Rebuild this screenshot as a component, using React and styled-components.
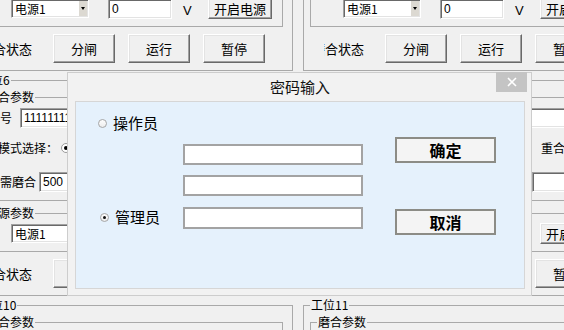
import styled, { createGlobalStyle } from "styled-components";

const GlobalStyle = createGlobalStyle`
  html, body { margin: 0; padding: 0; background: #f0f0f0; overflow: hidden; }
  * { box-sizing: border-box; }
`;

const cjk = `"Noto Sans CJK SC", "Liberation Sans", sans-serif`;

const Screen = styled.div`
  position: relative;
  width: 564px;
  height: 330px;
  overflow: hidden;
  background: #f0f0f0;
  font-family: ${cjk};
  color: #000;
`;

/* ---------- background form: station group boxes ---------- */

const StationGrid = styled.div`
  display: grid;
  grid-template-columns: repeat(2, 322px);
  column-gap: 10px;
  row-gap: 2px;
  margin: -152px 0 0 -29px;
`;

const GroupBox = styled.fieldset`
  margin: ${(p) => p.$margin || 0};
  padding: ${(p) => p.$padding};
  border: 1px solid #a9a9a9;
  min-width: 0;
`;

const Legend = styled.legend`
  padding: 0 1px;
  font-size: 12px;
  line-height: 14px;
  white-space: nowrap;
`;

const FieldRow = styled.div`
  display: flex;
  align-items: center;
  height: ${(p) => p.$h}px;
`;

const FieldLabel = styled.span`
  flex: none;
  width: ${(p) => p.$w}px;
  margin-left: ${(p) => p.$ml || 0}px;
  text-align: right;
  white-space: nowrap;
  font-size: 12px;
  line-height: 16px;
`;

const TextBox = styled.div`
  flex: none;
  width: ${(p) => p.$w}px;
  height: 20px;
  margin-left: ${(p) => p.$ml || 0}px;
  padding: 0 3px;
  background: #fff;
  border: 1px solid;
  border-color: #a0a0a0 #fff #fff #a0a0a0;
  box-shadow: inset 1px 1px 0 #696969, inset -1px -1px 0 #e3e3e3;
  font: 12px/18px "Liberation Sans", sans-serif;
  overflow: hidden;
  white-space: nowrap;
`;

const Combo = styled.div`
  flex: none;
  display: flex;
  width: 78px;
  height: 19px;
  margin-left: ${(p) => p.$ml}px;
  background: #fff;
  border: 1px solid;
  border-color: #a0a0a0 #fff #fff #a0a0a0;
  box-shadow: inset 1px 1px 0 #696969, inset -1px -1px 0 #e3e3e3;
`;

const ComboText = styled.span`
  flex: 1;
  padding-left: 3px;
  font-size: 12px;
  line-height: 17px;
`;

const ComboArrow = styled.span`
  display: flex;
  align-items: center;
  justify-content: center;
  width: 9px;
  margin: 1px 1px 1px 0;
  background: #dcd9d2;
  border-left: 1px solid #fff;

  &::after {
    content: "";
    border-left: 2px solid transparent;
    border-right: 2px solid transparent;
    border-top: 3px solid #000;
  }
`;

const Unit = styled.span`
  flex: none;
  width: 36px;
  padding: 5px 0 0 11px;
  font: 13px/16px "Liberation Sans", sans-serif;
`;

const ClassicButton = styled.button`
  flex: none;
  width: ${(p) => p.$w}px;
  height: ${(p) => p.$h}px;
  margin: 0 0 0 ${(p) => p.$ml || 0}px;
  padding: 0;
  font-family: ${cjk};
  font-size: 13px;
  line-height: 16px;
  color: #000;
  background: #f0f0f0;
  border: 1px solid;
  border-color: #fff #696969 #696969 #fff;
  box-shadow: inset -1px -1px 0 #a0a0a0, inset 1px 1px 0 #e3e3e3;
`;

const Option = styled.span`
  flex: none;
  display: flex;
  align-items: center;
  margin-left: ${(p) => p.$ml}px;
  font-size: 12px;
  line-height: 16px;
  white-space: nowrap;
`;

const OptionDot = styled.span`
  position: relative;
  width: 10px;
  height: 10px;
  margin-right: 9px;
  border-radius: 50%;
  border: 1px solid #9a9a9a;
  background: #fff;

  &::after {
    content: "";
    display: ${(p) => (p.$checked ? "block" : "none")};
    position: absolute;
    left: 2px;
    top: 2px;
    width: 4px;
    height: 4px;
    border-radius: 50%;
    background: #000;
  }
`;

const StatusRow = styled.div`
  display: flex;
  align-items: center;
  padding: 7px 0;
`;

const StatusLabel = styled.span`
  flex: none;
  display: flex;
  justify-content: flex-end;
  width: 40px;
  margin-left: 14px;
  overflow: hidden;
  white-space: nowrap;
  font-size: 13px;
  line-height: 16px;
`;

const ButtonStrip = styled.div`
  display: flex;
  gap: 13px;
  margin-left: 21px;
`;

function Station({ no }) {
  return (
    <GroupBox $padding="3px 9px 0 6px">
      <Legend>工位{no}</Legend>
      <GroupBox $padding="0 6px">
        <Legend>磨合参数</Legend>
        <FieldRow $h={28}>
          <FieldLabel $w={27}>编号</FieldLabel>
          <TextBox $w={252} $ml={8}>11111111</TextBox>
        </FieldRow>
        <FieldRow $h={32}>
          <FieldLabel $w={73}>模式选择：</FieldLabel>
          <Option $ml={3}>
            <OptionDot $checked />
            首次磨合
          </Option>
          <Option $ml={62}>
            <OptionDot />
            重合磨合
          </Option>
        </FieldRow>
        <FieldRow $h={36}>
          <FieldLabel $w={51}>所需磨合</FieldLabel>
          <TextBox $w={80} $ml={3}>500</TextBox>
          <FieldLabel $w={76}>间隔时间</FieldLabel>
          <TextBox $w={72} $ml={5} />
        </FieldRow>
      </GroupBox>
      <GroupBox $margin="5px 0 0" $padding="0 6px 4px">
        <Legend>电源参数</Legend>
        <FieldRow $h={27}>
          <Combo $ml={26}>
            <ComboText>电源1</ComboText>
            <ComboArrow />
          </Combo>
          <TextBox $w={64} $ml={19}>0</TextBox>
          <Unit>V</Unit>
          <ClassicButton $w={64} $h={21}>开启电源</ClassicButton>
        </FieldRow>
      </GroupBox>
      <StatusRow>
        <StatusLabel>磨合状态</StatusLabel>
        <ButtonStrip>
          <ClassicButton $w={62} $h={29}>分闸</ClassicButton>
          <ClassicButton $w={62} $h={29}>运行</ClassicButton>
          <ClassicButton $w={62} $h={29}>暂停</ClassicButton>
        </ButtonStrip>
      </StatusRow>
    </GroupBox>
  );
}

/* ---------- password dialog ---------- */

const Dialog = styled.div`
  position: absolute;
  left: 67px;
  top: 72px;
  width: 465px;
  height: 224px;
  display: flex;
  flex-direction: column;
  padding: 0 6px 6px 7px;
  background: #f2f2f2;
  border: 1px solid #cdcdcd;
`;

const TitleBar = styled.div`
  display: grid;
  grid-template-columns: 1fr auto 1fr;
  align-items: center;
  height: 28px;
`;

const Title = styled.span`
  font-size: 15px;
  line-height: 18px;
  color: #111;
`;

const CloseButton = styled.span`
  justify-self: end;
  align-self: start;
  display: flex;
  align-items: center;
  justify-content: center;
  width: 31px;
  height: 20px;
  margin: -1px -2px 0 0;
  background: #c4c4c4;
`;

const DialogBody = styled.div`
  flex: 1;
  display: flex;
  background: #e5f1fc;
  border: 1px solid #d6d6d6;
`;

const RoleColumn = styled.div`
  display: flex;
  flex-direction: column;
  width: 107px;
`;

const RoleOption = styled.div`
  display: flex;
  align-items: center;
  height: 20px;
  margin: ${(p) => p.$top}px 0 0 ${(p) => p.$indent}px;
  font-size: 15px;
  line-height: 20px;
  color: #000;
  white-space: nowrap;
`;

const RoleDot = styled.span`
  position: relative;
  width: 9px;
  height: 9px;
  margin-right: 6px;
  border-radius: 50%;
  border: 1px solid #a6a6a6;
  background: linear-gradient(#fdfdfd, #ececec);

  &::after {
    content: "";
    display: ${(p) => (p.$checked ? "block" : "none")};
    position: absolute;
    left: 2px;
    top: 2px;
    width: 3px;
    height: 3px;
    border-radius: 50%;
    background: #111;
  }
`;

const InputColumn = styled.div`
  display: flex;
  flex-direction: column;
  gap: 10px;
  width: 180px;
  padding-top: 42px;
`;

const PasswordInput = styled.input`
  width: 180px;
  height: ${(p) => (p.$tall ? 22 : 21)}px;
  margin: ${(p) => (p.$tall ? "1px 0 0" : 0)};
  padding: 0 3px;
  background: #fff;
  border: 2px solid #a3a3a3;
  outline: none;
  font: 13px "Liberation Sans", sans-serif;
`;

const ButtonColumn = styled.div`
  display: flex;
  flex-direction: column;
  gap: 46px;
  margin-left: 32px;
  padding-top: 35px;
`;

const DialogButton = styled.button`
  width: 101px;
  height: 26px;
  margin: 0;
  padding: 0;
  background: #f4f4f4;
  border: 2px solid #8c8c86;
  font-family: ${cjk};
  font-size: 16px;
  font-weight: 700;
  line-height: 20px;
  color: #000;
`;

export default function App() {
  return (
    <Screen>
      <GlobalStyle />
      <StationGrid>
        {[2, 3, 6, 7, 10, 11].map((no) => (
          <Station key={no} no={no} />
        ))}
      </StationGrid>

      <Dialog>
        <TitleBar>
          <span />
          <Title>密码输入</Title>
          <CloseButton>
            <svg width="10" height="10" viewBox="0 0 10 10">
              <path d="M1 1 L9 9 M9 1 L1 9" stroke="#fff" strokeWidth="1.6" />
            </svg>
          </CloseButton>
        </TitleBar>
        <DialogBody>
          <RoleColumn>
            <RoleOption $top={11} $indent={22}>
              <RoleDot />
              操作员
            </RoleOption>
            <RoleOption $top={74} $indent={24}>
              <RoleDot $checked />
              管理员
            </RoleOption>
          </RoleColumn>
          <InputColumn>
            <PasswordInput type="password" readOnly />
            <PasswordInput type="password" readOnly />
            <PasswordInput type="password" readOnly $tall />
          </InputColumn>
          <ButtonColumn>
            <DialogButton>确定</DialogButton>
            <DialogButton>取消</DialogButton>
          </ButtonColumn>
        </DialogBody>
      </Dialog>
    </Screen>
  );
}
